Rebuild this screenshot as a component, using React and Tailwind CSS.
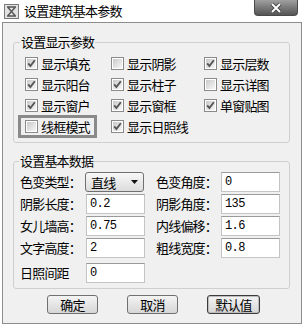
import React from "react";

// 对话框：设置建筑基本参数
const font = "font-['Noto_Sans_CJK_SC','Noto_Sans_CJK_JP',sans-serif]";

const CheckBox = ({ checked }) => (
  <svg width="13" height="13" viewBox="0 0 13 13" className="shrink-0">
    <defs>
      <linearGradient id="cbg" x1="0" y1="0" x2="1" y2="1">
        <stop offset="0" stopColor="#c9c9c9" />
        <stop offset="1" stopColor="#f7f7f7" />
      </linearGradient>
    </defs>
    <rect x="0.5" y="0.5" width="12" height="12" fill="#fff" stroke="#8a8a8a" />
    <rect x="2" y="2" width="9" height="9" fill="url(#cbg)" />
    {checked && (
      <path d="M3.2 6.4 L5.4 9 L9.8 3.2" fill="none" stroke="#555" strokeWidth="1.9" />
    )}
  </svg>
);

const Opsi = ({ label, checked, focus }) => (
  <div className="h-[21px] flex items-center">
    <span
      className={
        "inline-flex items-center gap-[3px] px-[4px] h-[17px] " +
        (focus ? "outline-[3px] outline-solid outline-[#8a8a8a]" : "")
      }
    >
      <CheckBox checked={checked} />
      <span className="leading-[14px]">{label}</span>
    </span>
  </div>
);

const Isian = ({ value }) => (
  <div className="w-[59px] h-[20px] bg-white border border-[#c4c4c4] border-t-[#9a9a9a] flex items-center pl-[3px] font-['Liberation_Mono',monospace] text-[12px] tracking-[-0.6px]">
    {value}
  </div>
);

const Tombol = ({ label, w, aktif }) => (
  <button
    className={
      "h-[19px] rounded-[3px] border bg-gradient-to-b from-[#f4f4f4] to-[#d6d6d6] flex items-center justify-center leading-none " +
      w +
      (aktif ? " border-[#3c3c3c] shadow-[inset_0_0_0_1px_#bdbdbd]" : " border-[#707070]")
    }
  >
    {label}
  </button>
);

const opsi = [
  { label: "显示填充", checked: true },
  { label: "显示阴影", checked: false },
  { label: "显示层数", checked: true },
  { label: "显示阳台", checked: true },
  { label: "显示柱子", checked: true },
  { label: "显示详图", checked: false },
  { label: "显示窗户", checked: true },
  { label: "显示窗框", checked: true },
  { label: "单窗贴图", checked: true },
  { label: "线框模式", checked: false, focus: true },
  { label: "显示日照线", checked: true },
];

export default function App() {
  return (
    <div className={"w-[303px] h-[325px] bg-white text-black text-[13px] tracking-[-0.8px] " + font}>
      {/* title bar */}
      <div className="h-[22px] flex items-start relative">
        <svg width="15" height="15" viewBox="0 0 15 15" className="ml-[4px] mt-[4px]">
          <rect x="0.5" y="0.5" width="14" height="14" fill="#e2e2e2" stroke="#7a7a7a" />
          <path d="M3 3 H12 M3 12 H12 M4 3.5 L11 11.5 M11 3.5 L4 11.5" stroke="#555" strokeWidth="1.4" fill="none" />
        </svg>
        <span className="ml-[5px] mt-[3px] leading-[16px]">设置建筑基本参数</span>
        <div className="ml-auto mr-[5px] w-[44px] h-[16px] rounded-b-[4px] border border-[#4a4a4a] border-t-0 bg-gradient-to-b from-[#a0a0a0] to-[#555] flex items-center justify-center">
          <svg width="12" height="10" viewBox="0 0 12 10">
            <path d="M2 1 L10 9 M10 1 L2 9" stroke="#3a3a3a" strokeWidth="3.6" />
            <path d="M2 1 L10 9 M10 1 L2 9" stroke="#fff" strokeWidth="2" />
          </svg>
        </div>
      </div>

      {/* panel */}
      <div className="ml-[2px] w-[300px] h-[302px] border border-[#8c8c8c] bg-[#f0f0f0] flex flex-col">
        <fieldset className="mt-[12px] ml-[10px] w-[277px] border border-[#cfcfcf] rounded-[3px] pl-[7px] pt-[4px] pb-[5px]">
          <legend className="px-[1px] -ml-[1px] leading-[14px]">设置显示参数</legend>
          <div className="grid grid-cols-[86px_93px_1fr]">
            {opsi.map((o) => (
              <Opsi key={o.label} label={o.label} checked={o.checked} focus={o.focus} />
            ))}
          </div>
        </fieldset>

        <fieldset className="mt-[11px] ml-[10px] w-[277px] border border-[#cfcfcf] rounded-[3px] pl-[6px] pt-[4px] pb-[5px]">
          <legend className="px-[1px] -ml-[1px] leading-[14px]">设置基本数据</legend>
          <div className="flex flex-col gap-[2px]">
            <div className="h-[20px] flex items-center">
              <span className="w-[65px]">色变类型：</span>
              <div className="w-[59px] h-[20px] rounded-[3px] border border-[#707070] bg-gradient-to-b from-[#f8f8f8] to-[#dcdcdc] flex items-center pl-[5px] pr-[5px]">
                <span className="leading-none">直线</span>
                <svg width="7" height="4" viewBox="0 0 7 4" className="ml-auto">
                  <path d="M0 0 H7 L3.5 4 Z" fill="#111" />
                </svg>
              </div>
              <span className="w-[77px] pl-[12px] whitespace-nowrap">色变角度：</span>
              <Isian value="0" />
            </div>
            <div className="h-[20px] flex items-center">
              <span className="w-[66px]">阴影长度：</span>
              <Isian value="0.2" />
              <span className="w-[76px] pl-[11px] whitespace-nowrap">阴影角度：</span>
              <Isian value="135" />
            </div>
            <div className="h-[20px] flex items-center">
              <span className="w-[66px]">女儿墙高：</span>
              <Isian value="0.75" />
              <span className="w-[76px] pl-[11px] whitespace-nowrap">内线偏移：</span>
              <Isian value="1.6" />
            </div>
            <div className="h-[20px] flex items-center">
              <span className="w-[66px]">文字高度：</span>
              <Isian value="2" />
              <span className="w-[76px] pl-[11px] whitespace-nowrap">粗线宽度：</span>
              <Isian value="0.8" />
            </div>
            <div className="h-[20px] flex items-center mt-[3px]">
              <span className="w-[66px]">日照间距</span>
              <Isian value="0" />
            </div>
          </div>
        </fieldset>

        <div className="mt-[6px] pl-[44px] flex gap-[29px]">
          <Tombol label="确定" w="w-[51px]" />
          <Tombol label="取消" w="w-[51px]" />
          <Tombol label="默认值" w="w-[53px]" aktif />
        </div>
      </div>
    </div>
  );
}
